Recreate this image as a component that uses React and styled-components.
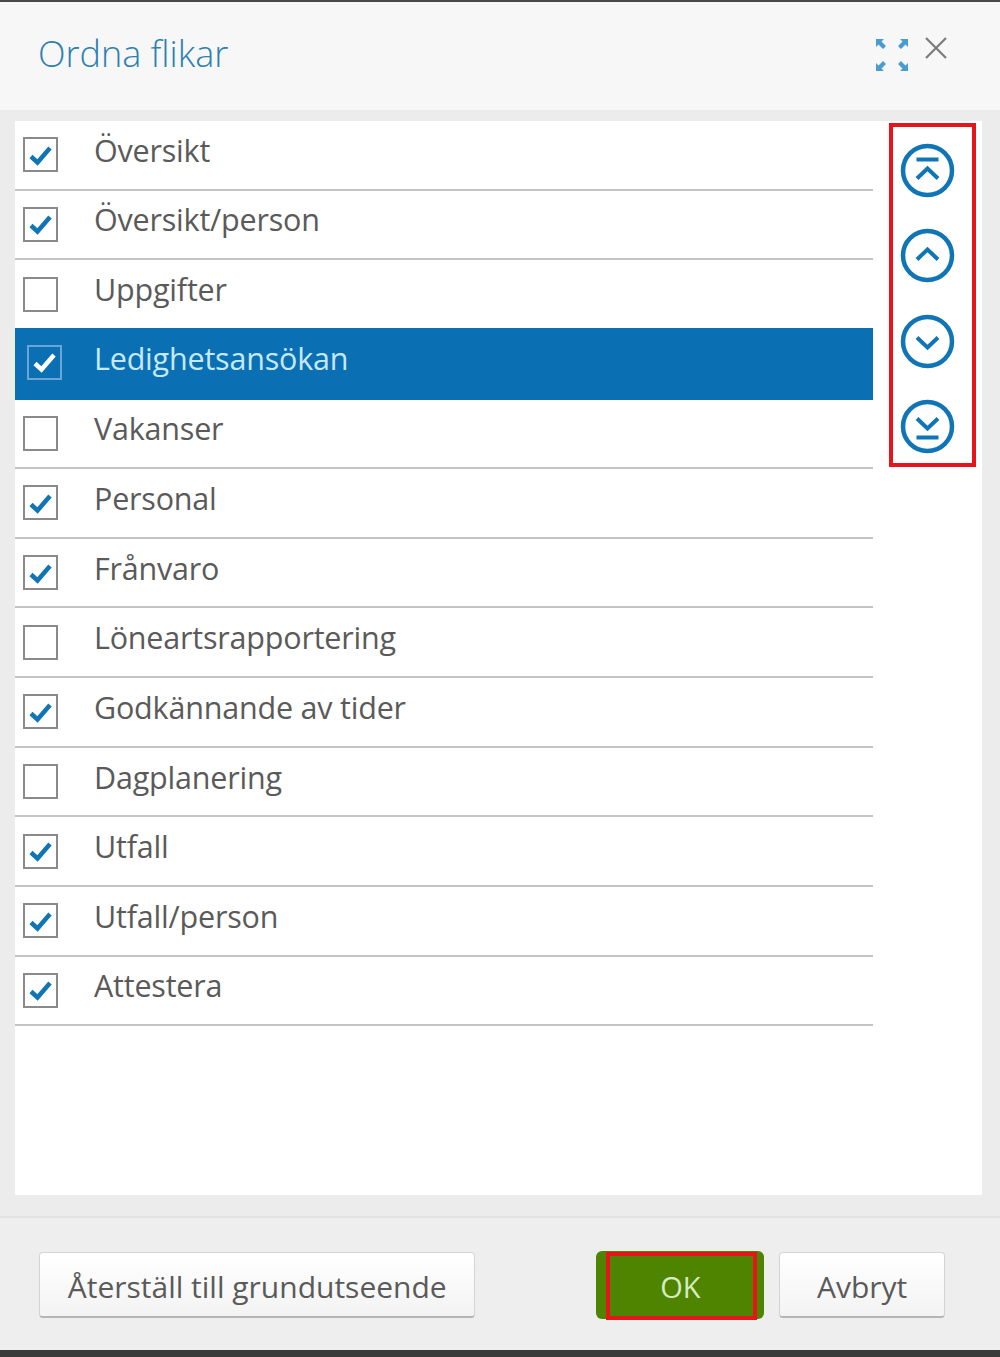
import styled, { createGlobalStyle } from "styled-components";

const Global = createGlobalStyle`
  html, body {
    margin: 0;
    padding: 0;
    background: #3a3a3a;
  }
  * {
    box-sizing: border-box;
  }
`;

const Dialog = styled.div`
  width: 1000px;
  height: 1357px;
  display: flex;
  flex-direction: column;
  font-family: "Open Sans", "Liberation Sans", sans-serif;
  border-top: 2px solid #4a4a4a;
  border-bottom: 7px solid #3a3a3a;
  background: #eeeeee;
`;

const Header = styled.div`
  height: 108px;
  flex: none;
  display: flex;
  align-items: center;
  justify-content: space-between;
  padding: 0 52px 5px 38px;
  background: #f7f7f7;
`;

const Title = styled.h1`
  margin: 0;
  font-size: 36px;
  font-weight: 300;
  color: #2a80b0;
`;

const HeaderIcons = styled.div`
  display: flex;
  align-items: flex-start;
  gap: 15px;
`;

const Body = styled.div`
  height: 1108px;
  flex: none;
  padding: 11px 18px 21px 15px;
  display: flex;
  background: #ececec;
  border-bottom: 2px solid #e2e2e2;
`;

const Panel = styled.div`
  flex: 1;
  display: flex;
  background: #ffffff;
`;

const List = styled.ul`
  width: 858px;
  flex: none;
  margin: 0;
  padding: 0;
  list-style: none;
`;

const Row = styled.li`
  height: ${(p) => (p.$selected ? "71.6px" : "69.65px")};
  margin-top: ${(p) => (p.$selected ? "-2px" : "0")};
  display: flex;
  align-items: center;
  gap: ${(p) => (p.$selected ? "32px" : "36px")};
  padding-left: ${(p) => (p.$selected ? "12px" : "8px")};
  padding-bottom: ${(p) => (p.$selected ? "3px" : "0")};
  border-bottom: ${(p) => (p.$selected ? "0" : "2px solid #c4c4c4")};
  background: ${(p) => (p.$selected ? "#0a6fb3" : "transparent")};
  color: ${(p) => (p.$selected ? "#c5e9fb" : "#5a5a5a")};
  font-size: 30.5px;
  font-weight: 400;
`;

const Label = styled.span`
  position: relative;
  top: ${(p) => (p.$selected ? "-4px" : "-5px")};
  letter-spacing: -0.2px;
`;

const Box = styled.span`
  width: 35px;
  height: 35px;
  flex: none;
  display: flex;
  align-items: center;
  justify-content: center;
  border: 2px solid ${(p) => (p.$selected ? "#6aa6d3" : "#8a8a8a")};
  background: ${(p) => (p.$selected ? "transparent" : "#ffffff")};
`;

const Mover = styled.div`
  width: 87px;
  height: 344px;
  margin: 2px 0 0 16px;
  padding: 16px 0 0 7px;
  display: flex;
  flex-direction: column;
  align-items: flex-start;
  gap: 30.3px;
  border: 4px solid #e8141c;
`;

const RoundButton = styled.svg`
  width: 55px;
  height: 55px;
  display: block;
`;

const Footer = styled.div`
  flex: 1;
  display: flex;
  align-items: flex-start;
  padding: 34px 55px 0 39px;
  background: #eeeeee;
`;

const Button = styled.button`
  height: 66px;
  width: ${(p) => p.$width}px;
  margin-left: ${(p) => p.$left || 0}px;
  padding: 3px 0 0;
  border: 1px solid #d4d4d4;
  border-bottom: 2px solid #b5b5b5;
  border-radius: 4px;
  background: linear-gradient(#ffffff, #f3f3f3);
  color: #5a5a5a;
  font-family: inherit;
  font-size: 30px;
`;

const OkButton = styled.button`
  position: relative;
  width: 168px;
  height: 68px;
  margin: -1px 0 0 121px;
  padding: 3px 0 0;
  border: 0;
  border-radius: 6px;
  background: #4f8400;
  color: #d6ecc0;
  font-family: inherit;
  font-size: 29px;
`;

const OkOutline = styled.span`
  position: absolute;
  left: 10px;
  top: 1px;
  width: 151px;
  height: 68px;
  border: 4px solid #e8141c;
`;

const tabs = [
  ["Översikt", true],
  ["Översikt/person", true],
  ["Uppgifter", false],
  ["Ledighetsansökan", true, true],
  ["Vakanser", false],
  ["Personal", true],
  ["Frånvaro", true],
  ["Löneartsrapportering", false],
  ["Godkännande av tider", true],
  ["Dagplanering", false],
  ["Utfall", true],
  ["Utfall/person", true],
  ["Attestera", true],
];

function Check({ color }) {
  return (
    <svg width="26" height="22" viewBox="0 0 26 22" fill="none">
      <path d="M3 12.5 L9.5 18.5 L22 4" stroke={color} strokeWidth="4.5" />
    </svg>
  );
}

function Round({ children }) {
  return (
    <RoundButton viewBox="0 0 55 55" fill="none" stroke="#0f75b5" strokeWidth="4.5">
      <circle cx="27.5" cy="27.5" r="24.5" />
      <g strokeWidth="4">{children}</g>
    </RoundButton>
  );
}

export default function App() {
  return (
    <Dialog>
      <Global />
      <Header>
        <Title>Ordna flikar</Title>
        <HeaderIcons>
          <svg width="34" height="34" viewBox="0 0 34 34" fill="#4a9bcf" style={{ marginTop: 2 }}>
            <path d="M1 1 H9 L6.5 3.5 L11 8 L8 11 L3.5 6.5 L1 9 Z" />
            <path d="M33 1 H25 L27.5 3.5 L23 8 L26 11 L30.5 6.5 L33 9 Z" />
            <path d="M1 33 H9 L6.5 30.5 L11 26 L8 23 L3.5 27.5 L1 25 Z" />
            <path d="M33 33 H25 L27.5 30.5 L23 26 L26 23 L30.5 27.5 L33 25 Z" />
          </svg>
          <svg width="24" height="24" viewBox="0 0 24 24" fill="none" stroke="#7c7c7c" strokeWidth="2.2">
            <path d="M2 2 L22 22 M22 2 L2 22" />
          </svg>
        </HeaderIcons>
      </Header>
      <Body>
        <Panel>
          <List>
            {tabs.map(([name, checked, selected]) => (
              <Row key={name} $selected={selected}>
                <Box $selected={selected}>
                  {checked && <Check color={selected ? "#ffffff" : "#0f75b5"} />}
                </Box>
                <Label $selected={selected}>{name}</Label>
              </Row>
            ))}
          </List>
          <Mover>
            <Round>
              <path d="M16.5 16.5 H38.5 M17 35.5 L27.5 25.5 L38 35.5" />
            </Round>
            <Round>
              <path d="M17 31.5 L27.5 21.5 L38 31.5" />
            </Round>
            <Round>
              <path d="M17 23.5 L27.5 33.5 L38 23.5" />
            </Round>
            <Round>
              <path d="M16.5 38.5 H38.5 M17 19.5 L27.5 29.5 L38 19.5" />
            </Round>
          </Mover>
        </Panel>
      </Body>
      <Footer>
        <Button $width={437}>Återställ till grundutseende</Button>
        <OkButton>
          OK
          <OkOutline />
        </OkButton>
        <Button $width={166} $left={15}>Avbryt</Button>
      </Footer>
    </Dialog>
  );
}
